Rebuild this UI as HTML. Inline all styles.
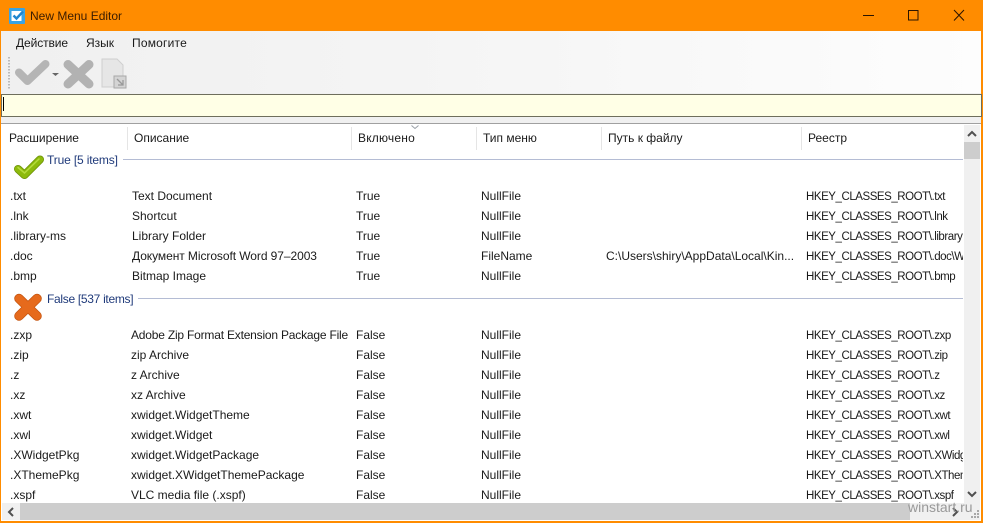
<!DOCTYPE html>
<html><head><meta charset="utf-8">
<style>
html,body{margin:0;padding:0}
body{width:983px;height:523px;overflow:hidden;position:relative;background:#fff;font:12px/16px "Liberation Sans",sans-serif;color:#1a1a1a}
div,span,svg{position:absolute}
.t{white-space:nowrap;line-height:16px}
.r{left:806px;font-size:11.5px;letter-spacing:-.45px;margin-top:1px}
.sep{top:127px;width:1px;height:23px;background:#e5e5e5}
.grp{color:#1f3a7a;white-space:nowrap;line-height:16px;letter-spacing:-.15px}
.ln{height:1px;background:#b4bcd4}
</style></head><body>
<div style="left:0;top:0;width:983px;height:523px;background:#ff8c00"></div>
<div style="left:1px;top:31px;width:980px;height:490px;background:#f0f0f0"></div>
<div style="left:1px;top:31px;width:980px;height:62px;background:linear-gradient(90deg,#f0f0f0 0%,#f4f4f4 40%,#fdfdfd 100%)"></div>

<svg style="left:9px;top:8px" width="16" height="16" viewBox="0 0 16 16"><rect width="16" height="16" rx="1" fill="#3aa3e3"/><rect x="2.5" y="3" width="10" height="10" fill="#fff"/><path d="M4.5 7.5l3 3L14 3.500" fill="none" stroke="#1f86cf" stroke-width="2.4"/></svg>
<div class="t" style="left:30px;top:8px;color:#3a1c00;font-size:12px">New Menu Editor</div>
<svg style="left:860px;top:8px" width="110" height="16" viewBox="0 0 110 16" fill="none" stroke="#2a1400" stroke-width="1"><path d="M3 7.500H14"/><rect x="48.500" y="2.500" width="9.500" height="9.500"/><path d="M94 2l10 10.500M104 2L94 12.500"/></svg>

<div class="t" style="left:16px;top:35px;letter-spacing:-.1px">Действие</div>
<div class="t" style="left:86px;top:35px">Язык</div>
<div class="t" style="left:132px;top:35px;letter-spacing:.2px">Помогите</div>

<svg style="left:7px;top:55px" width="130" height="38" viewBox="0 0 130 38">
<path d="M2 2V35" stroke="#a8a8a8" stroke-width="1.500" stroke-dasharray="1.500 1.500"/>
<path d="M12 17.500L20.500 26 38.500 9" fill="none" stroke="#b5b5b5" stroke-width="8" stroke-linejoin="round" stroke-linecap="round"/>
<path d="M45 18h7l-3.500 3z" fill="#666"/>
<path d="M61 9.500L82 29M82 9.500L61 29" fill="none" stroke="#b2b2b2" stroke-width="9" stroke-linecap="round"/>
<path d="M95 4h15l6 6v22H95z" fill="#e6e6e6" stroke="#cfcfcf"/>
<rect x="107" y="21" width="12" height="12" fill="#d4d4d4" stroke="#a8a8a8"/>
<path d="M110 24l6 6M116 25v5h-5" stroke="#999" fill="none" stroke-width="1.300"/>
</svg>

<div style="left:1px;top:94px;width:979px;height:21px;background:#ffffe6;border:1px solid #6e6e5c"></div>
<div style="left:3px;top:97px;width:1px;height:14px;background:#000"></div>

<div style="left:1px;top:123px;width:980px;height:398px;background:#fff;overflow:hidden">
<div style="left:0;top:0;width:980px;height:1px;background:#a0a0a0"></div>
</div>
<div style="left:0;top:0;width:963px;height:523px;overflow:hidden">
<span class="t" style="left:9px;top:130px">Расширение</span>
<span class="t" style="left:134px;top:130px">Описание</span>
<span class="t" style="left:358px;top:130px;letter-spacing:.2px">Включено</span>
<span class="t" style="left:483px;top:130px">Тип меню</span>
<span class="t" style="left:608px;top:130px">Путь к файлу</span>
<span class="t" style="left:808px;top:130px">Реестр</span>
<div class="sep" style="left:127px"></div><div class="sep" style="left:351px"></div><div class="sep" style="left:476px"></div><div class="sep" style="left:601px"></div><div class="sep" style="left:801px"></div>
<svg style="left:410px;top:125px" width="10" height="5" viewBox="0 0 10 5"><path d="M1.500 0.500l3.500 3 3.500-3" fill="none" stroke="#9aa0a8"/></svg>

<svg style="left:13px;top:154px" width="32" height="27" viewBox="0 0 32 27"><path d="M5 15l6.500 6L27 5.500" fill="none" stroke="#6d9208" stroke-width="8" stroke-linejoin="round" stroke-linecap="round"/><path d="M5 15l6.500 6L27 5.500" fill="none" stroke="#8dba0c" stroke-width="6.500" stroke-linejoin="round" stroke-linecap="round"/><path d="M5 13.500l6.500 5.500L26 5" fill="none" stroke="#b5dc3c" stroke-width="1.500" stroke-linecap="round"/></svg>
<span class="grp" style="left:47px;top:152px">True [5 items]</span>
<div class="ln" style="left:123px;top:159px;width:840px"></div>

<span class="t" style="left:10px;top:188px">.txt</span><span class="t" style="left:132px;top:188px">Text Document</span><span class="t" style="left:356px;top:188px">True</span><span class="t" style="left:481px;top:188px">NullFile</span><span class="t r" style="top:188px">HKEY_CLASSES_ROOT\.txt</span>
<span class="t" style="left:10px;top:208px">.lnk</span><span class="t" style="left:132px;top:208px">Shortcut</span><span class="t" style="left:356px;top:208px">True</span><span class="t" style="left:481px;top:208px">NullFile</span><span class="t r" style="top:208px">HKEY_CLASSES_ROOT\.lnk</span>
<span class="t" style="left:10px;top:228px">.library-ms</span><span class="t" style="left:132px;top:228px">Library Folder</span><span class="t" style="left:356px;top:228px">True</span><span class="t" style="left:481px;top:228px">NullFile</span><span class="t r" style="top:228px">HKEY_CLASSES_ROOT\.library</span>
<span class="t" style="left:10px;top:248px">.doc</span><span class="t" style="left:132px;top:248px;letter-spacing:-.07px">Документ Microsoft Word 97–2003</span><span class="t" style="left:356px;top:248px">True</span><span class="t" style="left:481px;top:248px">FileName</span><span class="t" style="left:606px;top:248px">C:\Users\shiry\AppData\Local\Kin...</span><span class="t r" style="top:248px">HKEY_CLASSES_ROOT\.doc\Word</span>
<span class="t" style="left:10px;top:268px">.bmp</span><span class="t" style="left:132px;top:268px">Bitmap Image</span><span class="t" style="left:356px;top:268px">True</span><span class="t" style="left:481px;top:268px">NullFile</span><span class="t r" style="top:268px">HKEY_CLASSES_ROOT\.bmp</span>

<svg style="left:13px;top:292px" width="30" height="30" viewBox="0 0 30 30"><path d="M6 6.500L24 24M24 6.500L6 24" fill="none" stroke="#c4540f" stroke-width="9.500" stroke-linecap="round"/><path d="M6 6.500L24 24M24 6.500L6 24" fill="none" stroke="#e66a1c" stroke-width="8" stroke-linecap="round"/></svg>
<span class="grp" style="left:47px;top:291px;letter-spacing:-.3px">False [537 items]</span>
<div class="ln" style="left:138px;top:298px;width:825px"></div>

<span class="t" style="left:10px;top:327px">.zxp</span><span class="t" style="left:131px;top:327px;letter-spacing:-.2px">Adobe Zip Format Extension Package File</span><span class="t" style="left:356px;top:327px">False</span><span class="t" style="left:481px;top:327px">NullFile</span><span class="t r" style="top:327px">HKEY_CLASSES_ROOT\.zxp</span>
<span class="t" style="left:10px;top:347px">.zip</span><span class="t" style="left:131px;top:347px">zip Archive</span><span class="t" style="left:356px;top:347px">False</span><span class="t" style="left:481px;top:347px">NullFile</span><span class="t r" style="top:347px">HKEY_CLASSES_ROOT\.zip</span>
<span class="t" style="left:10px;top:367px">.z</span><span class="t" style="left:131px;top:367px">z Archive</span><span class="t" style="left:356px;top:367px">False</span><span class="t" style="left:481px;top:367px">NullFile</span><span class="t r" style="top:367px">HKEY_CLASSES_ROOT\.z</span>
<span class="t" style="left:10px;top:387px">.xz</span><span class="t" style="left:131px;top:387px">xz Archive</span><span class="t" style="left:356px;top:387px">False</span><span class="t" style="left:481px;top:387px">NullFile</span><span class="t r" style="top:387px">HKEY_CLASSES_ROOT\.xz</span>
<span class="t" style="left:10px;top:407px">.xwt</span><span class="t" style="left:131px;top:407px">xwidget.WidgetTheme</span><span class="t" style="left:356px;top:407px">False</span><span class="t" style="left:481px;top:407px">NullFile</span><span class="t r" style="top:407px">HKEY_CLASSES_ROOT\.xwt</span>
<span class="t" style="left:10px;top:427px">.xwl</span><span class="t" style="left:131px;top:427px">xwidget.Widget</span><span class="t" style="left:356px;top:427px">False</span><span class="t" style="left:481px;top:427px">NullFile</span><span class="t r" style="top:427px">HKEY_CLASSES_ROOT\.xwl</span>
<span class="t" style="left:10px;top:447px">.XWidgetPkg</span><span class="t" style="left:131px;top:447px">xwidget.WidgetPackage</span><span class="t" style="left:356px;top:447px">False</span><span class="t" style="left:481px;top:447px">NullFile</span><span class="t r" style="top:447px">HKEY_CLASSES_ROOT\.XWidgetPkg</span>
<span class="t" style="left:10px;top:467px">.XThemePkg</span><span class="t" style="left:131px;top:467px">xwidget.XWidgetThemePackage</span><span class="t" style="left:356px;top:467px">False</span><span class="t" style="left:481px;top:467px">NullFile</span><span class="t r" style="top:467px">HKEY_CLASSES_ROOT\.XThemePkg</span>
<span class="t" style="left:10px;top:487px">.xspf</span><span class="t" style="left:131px;top:487px">VLC media file (.xspf)</span><span class="t" style="left:356px;top:487px">False</span><span class="t" style="left:481px;top:487px">NullFile</span><span class="t r" style="top:487px">HKEY_CLASSES_ROOT\.xspf</span>
</div>

<div style="left:964px;top:125px;width:16px;height:378px;background:#f0f0f0"></div>
<div style="left:964px;top:142px;width:16px;height:17px;background:#cdcdcd"></div>
<svg style="left:964px;top:125px" width="16" height="16" viewBox="0 0 16 16"><path d="M4 11l4-4 4 4" fill="none" stroke="#505050" stroke-width="2"/></svg>
<svg style="left:964px;top:487px" width="16" height="16" viewBox="0 0 16 16"><path d="M4 5l4 4 4-4" fill="none" stroke="#505050" stroke-width="2"/></svg>
<div style="left:2px;top:503px;width:978px;height:17px;background:#f0f0f0"></div>
<div style="left:20px;top:503px;width:890px;height:17px;background:#cdcdcd"></div>
<svg style="left:3px;top:504px" width="16" height="16" viewBox="0 0 16 16"><path d="M10 4L6 8l4 4" fill="none" stroke="#505050" stroke-width="2"/></svg>
<svg style="left:947px;top:504px" width="16" height="16" viewBox="0 0 16 16"><path d="M6 4l4 4-4 4" fill="none" stroke="#505050" stroke-width="2"/></svg>
<svg style="left:971px;top:510px" width="9" height="9" viewBox="0 0 9 9" fill="#a8a8a8"><rect x="6" y="0" width="2" height="2"/><rect x="3" y="3" width="2" height="2"/><rect x="6" y="3" width="2" height="2"/><rect x="0" y="6" width="2" height="2"/><rect x="3" y="6" width="2" height="2"/><rect x="6" y="6" width="2" height="2"/></svg>
<div class="t" style="left:908px;top:498px;font-size:14px;line-height:18px;color:#999">winstart.ru</div>
</body></html>
